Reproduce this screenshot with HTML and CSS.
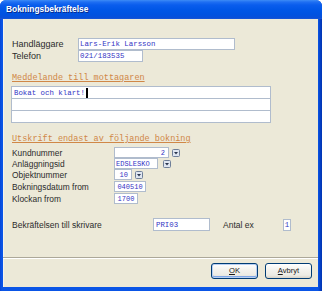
FILE: index.html
```html
<!DOCTYPE html>
<html>
<head>
<meta charset="utf-8">
<link rel="stylesheet" href="styles.css">
</head>
<body>
<div class="window">
  <div class="titlebar">Bokningsbekräftelse</div>
  <div class="client">
    <div class="form">
      <div class="row top">
        <span class="label label-top">Handläggare</span>
        <span class="field f-name">Lars-Erik Larsson</span>
      </div>
      <div class="row top">
        <span class="label label-top">Telefon</span>
        <span class="field f-tel">021/183535</span>
      </div>

      <div class="heading">Meddelande till mottagaren</div>
      <div class="memo">
        <div class="memo-line">Bokat och klart!<span class="caret"></span></div>
        <div class="memo-line"></div>
        <div class="memo-line"></div>
      </div>

      <div class="heading">Utskrift endast av följande bokning</div>
      <div class="criteria">
        <div class="row crit">
          <span class="label label-crit">Kundnummer</span>
          <span class="field f-kund num">2</span>
          <span class="combo"><svg width="8" height="8" viewBox="0 0 8 8"><rect x="0.5" y="0.5" width="7" height="7" rx="1" fill="#dfe6f1" stroke="#6f7f98"/><path d="M2 3 L6 3 L4 5.6 Z" fill="#2a3550"/></svg></span>
        </div>
        <div class="row crit">
          <span class="label label-crit">Anläggningsid</span>
          <span class="field f-anl">EDSLESKO</span>
          <span class="combo wide"><svg width="8" height="8" viewBox="0 0 8 8"><rect x="0.5" y="0.5" width="7" height="7" rx="1" fill="#dfe6f1" stroke="#6f7f98"/><path d="M2 3 L6 3 L4 5.6 Z" fill="#2a3550"/></svg></span>
        </div>
        <div class="row crit">
          <span class="label label-crit">Objektnummer</span>
          <span class="field f-obj num">10</span>
          <span class="combo"><svg width="8" height="8" viewBox="0 0 8 8"><rect x="0.5" y="0.5" width="7" height="7" rx="1" fill="#dfe6f1" stroke="#6f7f98"/><path d="M2 3 L6 3 L4 5.6 Z" fill="#2a3550"/></svg></span>
        </div>
        <div class="row crit">
          <span class="label label-crit">Bokningsdatum from</span>
          <span class="field f-date center">040510</span>
        </div>
        <div class="row crit">
          <span class="label label-crit">Klockan from</span>
          <span class="field f-time center">1700</span>
        </div>
      </div>

      <div class="row printer">
        <span class="label label-print">Bekräftelsen till skrivare</span>
        <span class="field f-printer">PRI03</span>
        <span class="label label-antal">Antal ex</span>
        <span class="field f-antal center">1</span>
      </div>
    </div>

    <div class="footer">
      <div class="separator"></div>
      <div class="buttons">
        <button class="btn btn-default"><u>O</u>K</button>
        <button class="btn"><u>A</u>vbryt</button>
      </div>
    </div>
  </div>
</div>
</body>
</html>
```

FILE: styles.css
```css
html, body {
  margin: 0;
  padding: 0;
  background: #ffffff;
}

body {
  width: 322px;
  height: 291px;
  overflow: hidden;
}

.window {
  width: 322px;
  height: 291px;
  box-sizing: border-box;
  display: flex;
  flex-direction: column;
  background: linear-gradient(90deg, #0846d6 0, #0a55e6 2px, #0a55e6 318px, #0541c8 320px, #0033b0 322px);
  border-radius: 6px 6px 0 0;
  overflow: hidden;
}

.titlebar {
  height: 19px;
  flex: 0 0 19px;
  line-height: 19px;
  padding-left: 6px;
  color: #ffffff;
  font-family: "Liberation Sans", Arial, sans-serif;
  font-weight: bold;
  font-size: 8.4px;
  text-shadow: 1px 1px 0 #0a2a8a;
  background: linear-gradient(180deg, #3d8cf6 0, #1f6ff2 2px, #0a5ded 5px, #0056e6 10px, #0052e0 15px, #0a4fd8 18px, #1d5ad6 19px);
}

.client {
  flex: 1;
  margin: 0 4px 4px 3px;
  background: #ece9d8;
  display: flex;
  flex-direction: column;
  box-shadow: inset 1px 0 0 #f6f3ea;
}

.form {
  padding: 19px 0 0 9px;
  font-family: "Liberation Sans", Arial, sans-serif;
  color: #2b2b2b;
}

.row {
  display: flex;
  align-items: center;
}

.row.top {
  height: 12px;
}

.label {
  white-space: nowrap;
}

.label-top {
  width: 66px;
  font-size: 9px;
}

.field {
  box-sizing: border-box;
  display: flex;
  align-items: center;
  background: #ffffff;
  border: 1px solid #b0bccd;
  font-family: "Liberation Mono", "Courier New", monospace;
  font-size: 7.4px;
  color: #3434c4;
  padding: 0 1px;
  white-space: nowrap;
  overflow: hidden;
}

.f-name {
  width: 157px;
  height: 12px;
}

.f-tel {
  width: 65px;
  height: 12px;
}

.heading {
  margin-top: 11px;
  height: 11px;
  line-height: 11px;
  font-family: "Liberation Mono", "Courier New", monospace;
  font-size: 8.5px;
  color: #d08747;
  text-decoration: underline;
  text-underline-offset: 1px;
  white-space: nowrap;
}

.memo {
  margin: 2px 0 0 -1px;
  width: 260px;
  display: flex;
  flex-direction: column;
}

.memo-line {
  box-sizing: border-box;
  height: 13px;
  border: 1px solid #b0bccd;
  background: #ffffff;
  font-family: "Liberation Mono", "Courier New", monospace;
  font-size: 7.4px;
  color: #3434c4;
  padding-left: 2px;
  display: flex;
  align-items: center;
}

.memo-line + .memo-line {
  margin-top: -1px;
}

.caret {
  display: inline-block;
  width: 2px;
  height: 10px;
  background: #000000;
  margin-left: 1px;
}

.criteria {
  margin-top: 2px;
}

.row.crit {
  height: 11px;
}

.row.crit:nth-child(n+4) {
  margin-top: 1px;
}

.label-crit {
  width: 102px;
  font-size: 8.4px;
}

.row.crit .field {
  height: 11px;
  font-size: 7px;
}

.num {
  justify-content: flex-end;
  padding-right: 3px;
}

.center {
  justify-content: center;
}

.f-kund { width: 55px; }
.f-anl { width: 44px; }
.f-obj { width: 18px; }
.f-date { width: 32px; }
.f-time { width: 24px; }

.combo {
  display: flex;
  margin-left: 3px;
}

.combo.wide {
  margin-left: 5px;
}

.row.printer {
  margin-top: 14px;
  height: 13px;
}

.label-print {
  width: 141px;
  font-size: 8.5px;
}

.f-printer {
  width: 57px;
  height: 13px;
  padding-left: 2px;
}

.label-antal {
  margin-left: 13px;
  width: 60px;
  font-size: 8.5px;
}

.f-antal {
  width: 8px;
  height: 12px;
  padding: 0;
}

.footer {
  margin-top: 26px;
  display: flex;
  flex-direction: column;
}

.separator {
  height: 0;
  border-top: 1px solid #aca899;
  border-bottom: 1px solid #ffffff;
}

.buttons {
  display: flex;
  justify-content: flex-end;
  gap: 7px;
  padding: 4px 6px 8px 0;
}

.btn {
  box-sizing: border-box;
  width: 47px;
  height: 16px;
  padding: 0;
  border: 1px solid #003c74;
  border-radius: 3px;
  background: linear-gradient(180deg, #ffffff 0, #f4f3ee 40%, #ecebe4 80%, #d8d3c8 100%);
  font-family: "Liberation Sans", Arial, sans-serif;
  font-size: 7.6px;
  color: #1a1a1a;
  line-height: 14px;
}

.btn-default {
  box-shadow: inset 0 0 0 1px #b7cff3, inset 0 -1px 0 1px #7fa6e6;
}
```
